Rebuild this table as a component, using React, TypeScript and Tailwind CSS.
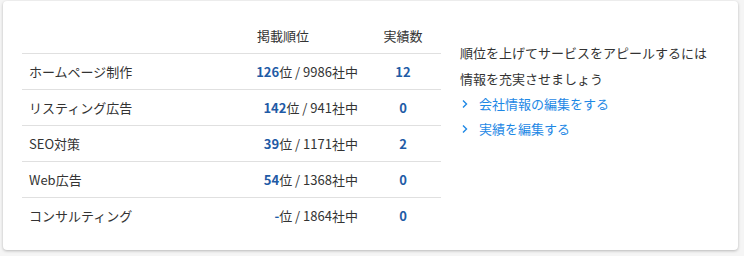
import React from 'react';

const rows = [
  { name: 'ホームページ制作', rank: '126', total: '9986', count: '12' },
  { name: 'リスティング広告', rank: '142', total: '941', count: '0' },
  { name: 'SEO対策', rank: '39', total: '1171', count: '2' },
  { name: 'Web広告', rank: '54', total: '1368', count: '0' },
  { name: 'コンサルティング', rank: '-', total: '1864', count: '0' },
];

function Chevron() {
  return (
    <svg width="8" height="10" viewBox="0 0 8 10" className="ml-[1px] mr-[10px]">
      <path d="M2 1.5 L5.5 5 L2 8.5" fill="none" stroke="#1e88e5" strokeWidth="1.4" />
    </svg>
  );
}

export default function App() {
  return (
    <div
      className="w-[744px] h-[256px] bg-[#f5f5f5] pt-[1px] pl-[3px] text-[13px] text-[#333]"
      style={{ fontFamily: '"Noto Sans CJK JP", "Noto Sans", sans-serif' }}
    >
      <div className="w-[735px] h-[249px] bg-white rounded-[4px] shadow-[0_1px_3px_rgba(0,0,0,0.25)] flex pl-[19px] pt-[19px]">
        <div className="w-[419px]">
          <div className="grid grid-cols-[178px_165px_76px] h-[34px] pb-[2px] items-center border-b border-[#e0e0e0]">
            <div />
            <div className="text-center pl-[1px]">掲載順位</div>
            <div className="text-center">実績数</div>
          </div>
          {rows.map((r, i) => (
            <div
              key={r.name}
              className={
                'grid grid-cols-[178px_165px_76px] h-[36px] items-center ' +
                (i < rows.length - 1 ? 'border-b border-[#e0e0e0]' : '')
              }
            >
              <div className="pl-[7px]">{r.name}</div>
              <div className="text-right pr-[7px]">
                <span className="font-bold text-[#1f5ba6]">{r.rank}</span>位 / {r.total}社中
              </div>
              <div className="text-center font-bold text-[#1f5ba6]">{r.count}</div>
            </div>
          ))}
        </div>
        <div className="pl-[19px] pt-[20px]">
          <div className="leading-[26px]">
            順位を上げてサービスをアピールするには
            <br />
            情報を充実させましょう
          </div>
          <div className="flex items-center h-[25px] mt-[-1px] text-[#1e88e5]">
            <Chevron />
            会社情報の編集をする
          </div>
          <div className="flex items-center h-[25px] text-[#1e88e5]">
            <Chevron />
            実績を編集する
          </div>
        </div>
      </div>
    </div>
  );
}
